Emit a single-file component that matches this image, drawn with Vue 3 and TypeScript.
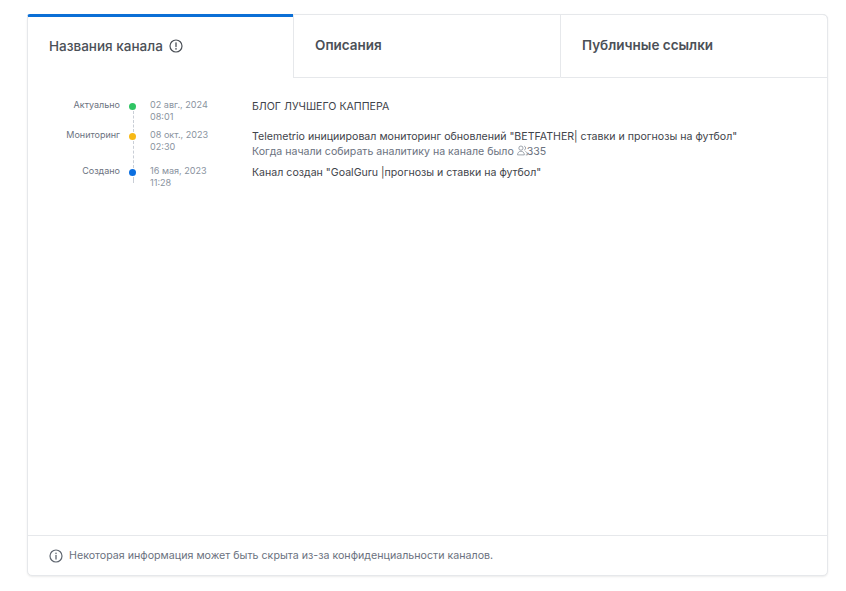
<template>
  <div class="page">
    <div class="card">
      <div class="tabs">
        <div v-for="(tab, i) in tabs" :key="tab" class="tab" :class="{ active: i === 0 }">
          <span>{{ tab }}</span>
          <svg v-if="i === 0" class="tab-icon" width="14" height="14" viewBox="0 0 14 14" fill="none">
            <circle cx="7" cy="7" r="6" stroke="#4b5057" stroke-width="1.2" />
            <path d="M7 3.8v3.8" stroke="#4b5057" stroke-width="1.3" stroke-linecap="round" />
            <circle cx="7" cy="9.9" r="0.8" fill="#4b5057" />
          </svg>
        </div>
      </div>
      <div class="body">
        <div v-for="row in rows" :key="row.label" class="row">
          <div class="label">{{ row.label }}</div>
          <div class="mark">
            <span class="dot" :style="{ background: row.color }"></span>
            <span class="line"></span>
          </div>
          <div class="date">{{ row.date }}<br />{{ row.time }}</div>
          <div class="content">
            <div>{{ row.text }}</div>
            <div v-if="row.extra" class="extra">
              {{ row.extra }}
              <svg class="users" width="11" height="11" viewBox="0 0 12 12" fill="none">
                <circle cx="4.3" cy="3.4" r="2.3" stroke="#7d8590" stroke-width="0.8" />
                <path d="M0.6 10.8c0-2.4 1.6-4 3.7-4s3.7 1.6 3.7 4z" stroke="#7d8590" stroke-width="0.8" stroke-linejoin="round" />
                <path d="M7.8 1.2a2.3 2.3 0 0 1 0 4.4M9.2 7c1.3.5 2.2 1.9 2.2 3.8H9.6" stroke="#7d8590" stroke-width="0.8" />
              </svg><span class="count">335</span>
            </div>
          </div>
        </div>
      </div>
      <div class="footer">
        <svg width="14" height="14" viewBox="0 0 14 14" fill="none">
          <circle cx="7" cy="7" r="6" stroke="#5f6670" stroke-width="1.2" />
          <path d="M7 6.4v3.6" stroke="#5f6670" stroke-width="1.3" stroke-linecap="round" />
          <circle cx="7" cy="4.2" r="0.8" fill="#5f6670" />
        </svg>
        <span>Некоторая информация может быть скрыта из-за конфиденциальности каналов.</span>
      </div>
    </div>
  </div>
</template>

<script setup lang="ts">
interface HistoryRow {
  label: string
  color: string
  date: string
  time: string
  text: string
  extra?: string
}

const tabs: string[] = ['Названия канала', 'Описания', 'Публичные ссылки']

const rows: HistoryRow[] = [
  {
    label: 'Актуально',
    color: '#2fc463',
    date: '02 авг., 2024',
    time: '08:01',
    text: 'БЛОГ ЛУЧШЕГО КАППЕРА'
  },
  {
    label: 'Мониторинг',
    color: '#f7b916',
    date: '08 окт., 2023',
    time: '02:30',
    text: 'Telemetrio инициировал мониторинг обновлений "BETFATHER| ставки и прогнозы на футбол"',
    extra: 'Когда начали собирать аналитику на канале было'
  },
  {
    label: 'Создано',
    color: '#0b6fe0',
    date: '16 мая, 2023',
    time: '11:28',
    text: 'Канал создан "GoalGuru |прогнозы и ставки на футбол"'
  }
]
</script>

<style>
html,
body {
  background: #fff;
}
</style>

<style scoped>
.page {
  width: 846px;
  height: 591px;
  padding: 14px 18px 15px 27px;
  box-sizing: border-box;
  font-family: Inter, "Liberation Sans", sans-serif;
}

.card {
  height: 100%;
  display: flex;
  flex-direction: column;
  box-sizing: border-box;
  border: 1px solid #e6e8eb;
  border-radius: 5px;
  box-shadow: 0 1px 2px rgba(0, 0, 0, 0.08);
  background: #fff;
}

.tabs {
  display: flex;
  height: 64px;
  margin: -1px -1px 0;
}

.tab {
  flex: 1;
  display: flex;
  align-items: center;
  gap: 6px;
  padding: 0 21px 2px;
  font-size: 13.5px;
  font-weight: 600;
  color: #4b5057;
  border-bottom: 1px solid #e6e8eb;
  border-top: 1px solid #e6e8eb;
  border-left: 1px solid #e6e8eb;
  box-sizing: border-box;
}

.tab:last-child {
  border-right: 1px solid #e6e8eb;
  border-top-right-radius: 5px;
}

.tab.active {
  flex: 0 0 266px;
  border-top: 3px solid #0b6fd6;
  border-bottom-color: transparent;
  border-left-color: #e6e8eb;
  border-top-left-radius: 3px;
  font-weight: 500;
  padding-bottom: 2px;
}

.tab-icon {
  flex: none;
}

.body {
  flex: 1;
  padding: 21px 0 0;
}

.row {
  display: grid;
  grid-template-columns: 92px 25px 107px 1fr;
  font-size: 9px;
  line-height: 12px;
}

.label {
  text-align: right;
  color: #6b7280;
}

.mark {
  position: relative;
  align-self: stretch;
}

.dot {
  position: absolute;
  left: 9px;
  top: 4px;
  width: 7px;
  height: 7px;
  border-radius: 50%;
}

.line {
  position: absolute;
  left: 13px;
  top: 12px;
  bottom: -3px;
  border-left: 1px dashed #c9ced6;
}

.row:last-child .line {
  bottom: 12px;
}

.date {
  color: #8a93a0;
  font-size: 9.1px;
  padding-left: 5px;
  padding-bottom: 6px;
}

.content {
  font-size: 10.6px;
  line-height: 15px;
  color: #3f444b;
  padding-bottom: 6px;
}

.extra {
  color: #6b7280;
}

.users {
  vertical-align: -1px;
}

.count {
  margin-left: -1px;
}

.footer {
  height: 39px;
  display: flex;
  align-items: center;
  gap: 6px;
  padding-left: 21px;
  border-top: 1px solid #e6e8eb;
  font-size: 10.66px;
  color: #6b7280;
}
</style>
